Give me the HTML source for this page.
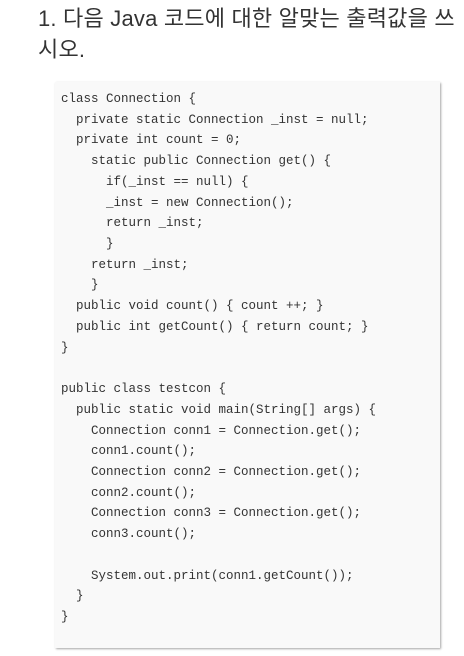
<!DOCTYPE html>
<html><head><meta charset="utf-8"><style>
body{margin:0;background:#fff;width:464px;height:656px;overflow:hidden}
h1{position:absolute;left:38px;top:3px;margin:0;font:400 22px/31px "Liberation Sans","Noto Sans CJK KR",sans-serif;color:#333;width:420px;letter-spacing:0.2px}
.box{position:absolute;left:55px;top:82px;width:385px;height:566px;background:#f9f9f9;box-shadow:1px 1px 2px rgba(0,0,0,0.35)}
pre{margin:0;padding:7px 0 0 6px;font:12.5px/20.72px "Liberation Mono",monospace;color:#333}
</style></head><body>
<h1>1. 다음 Java 코드에 대한 알맞는 출력값을 쓰시오.</h1>
<div class="box"><pre>class Connection {
  private static Connection _inst = null;
  private int count = 0;
    static public Connection get() {
      if(_inst == null) {
      _inst = new Connection();
      return _inst;
      }
    return _inst;
    }
  public void count() { count ++; }
  public int getCount() { return count; }
}

public class testcon {
  public static void main(String[] args) {
    Connection conn1 = Connection.get();
    conn1.count();
    Connection conn2 = Connection.get();
    conn2.count();
    Connection conn3 = Connection.get();
    conn3.count();

    System.out.print(conn1.getCount());
  }
}</pre></div>
</body></html>
